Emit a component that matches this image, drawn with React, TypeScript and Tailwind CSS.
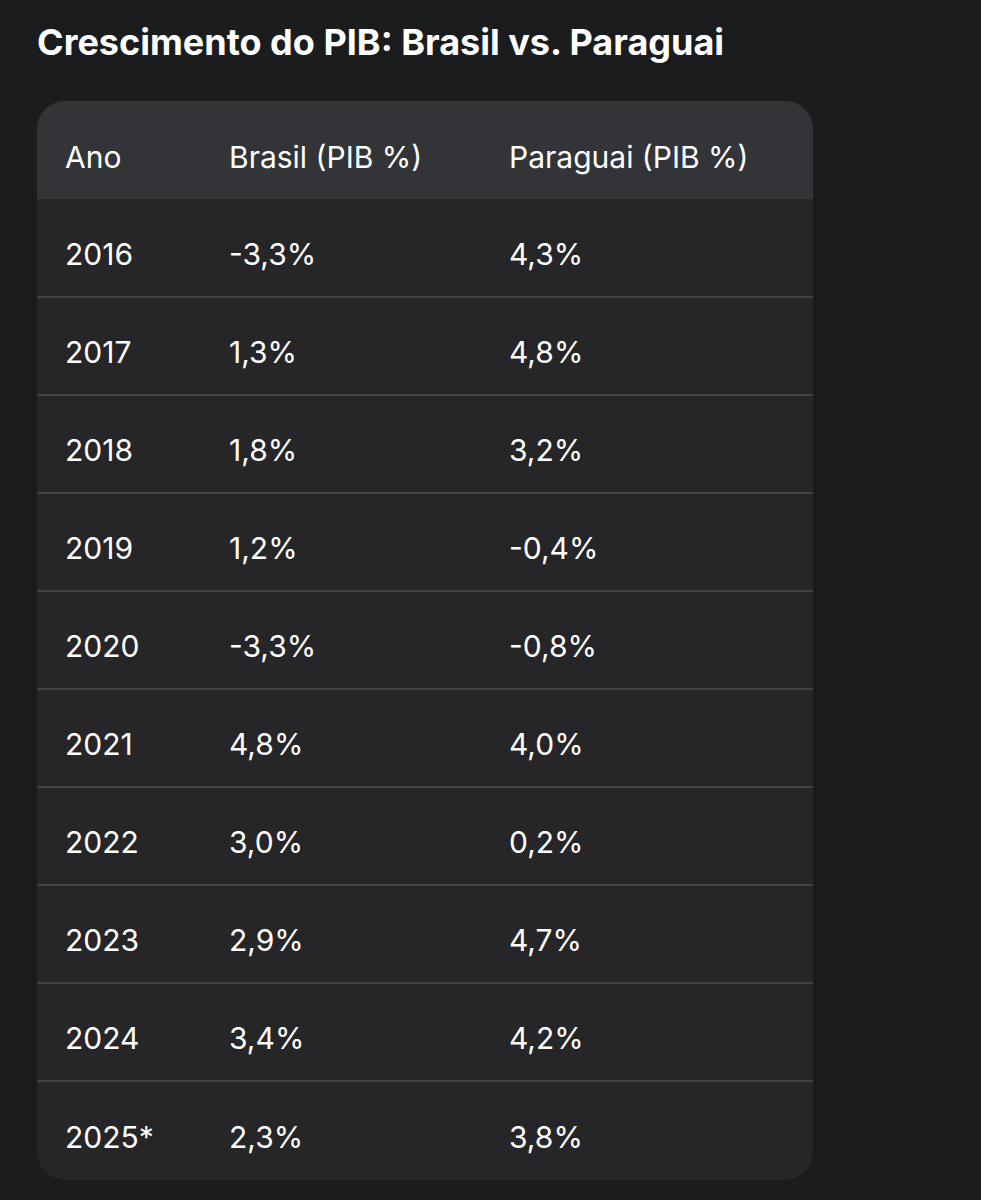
import React from "react";

const rows = [
  { year: "2016", brasil: "-3,3%", paraguai: "4,3%" },
  { year: "2017", brasil: "1,3%", paraguai: "4,8%" },
  { year: "2018", brasil: "1,8%", paraguai: "3,2%" },
  { year: "2019", brasil: "1,2%", paraguai: "-0,4%" },
  { year: "2020", brasil: "-3,3%", paraguai: "-0,8%" },
  { year: "2021", brasil: "4,8%", paraguai: "4,0%" },
  { year: "2022", brasil: "3,0%", paraguai: "0,2%" },
  { year: "2023", brasil: "2,9%", paraguai: "4,7%" },
  { year: "2024", brasil: "3,4%", paraguai: "4,2%" },
  { year: "2025*", brasil: "2,3%", paraguai: "3,8%" },
];

export default function App() {
  return (
    <div className="min-h-[1200px] w-full bg-[#1b1c1e] px-[37px] pt-[20px] pb-[21px] font-['Inter','Roboto',sans-serif] text-white">
      <h1 className="text-[36px] font-bold leading-[44px] tracking-normal text-white">
        Crescimento do PIB: Brasil vs. Paraguai
      </h1>

      {/* Tabela */}
      <div className="mt-[37px] w-[776px] overflow-hidden rounded-[28px] bg-[#262628]">
        <table className="w-full table-fixed border-collapse text-left text-[30px] leading-[36px]">
          <colgroup>
            <col className="w-[192px]" />
            <col className="w-[280px]" />
            <col />
          </colgroup>
          <thead>
            <tr className="h-[98px] bg-[#333437]">
              <th className="pl-[28px] pt-[14px] font-normal">Ano</th>
              <th className="pt-[14px] font-normal">Brasil (PIB %)</th>
              <th className="pt-[14px] font-normal">Paraguai (PIB %)</th>
            </tr>
          </thead>
          <tbody>
            {rows.map((row, i) => (
              <tr
                key={row.year}
                className={
                  i < rows.length - 1
                    ? "h-[98px] border-b-2 border-[#434345]"
                    : "h-[99px]"
                }
              >
                <td className="pl-[28px] pt-[12px]">{row.year}</td>
                <td className="pt-[12px]">{row.brasil}</td>
                <td className="pt-[12px]">{row.paraguai}</td>
              </tr>
            ))}
          </tbody>
        </table>
      </div>
    </div>
  );
}
